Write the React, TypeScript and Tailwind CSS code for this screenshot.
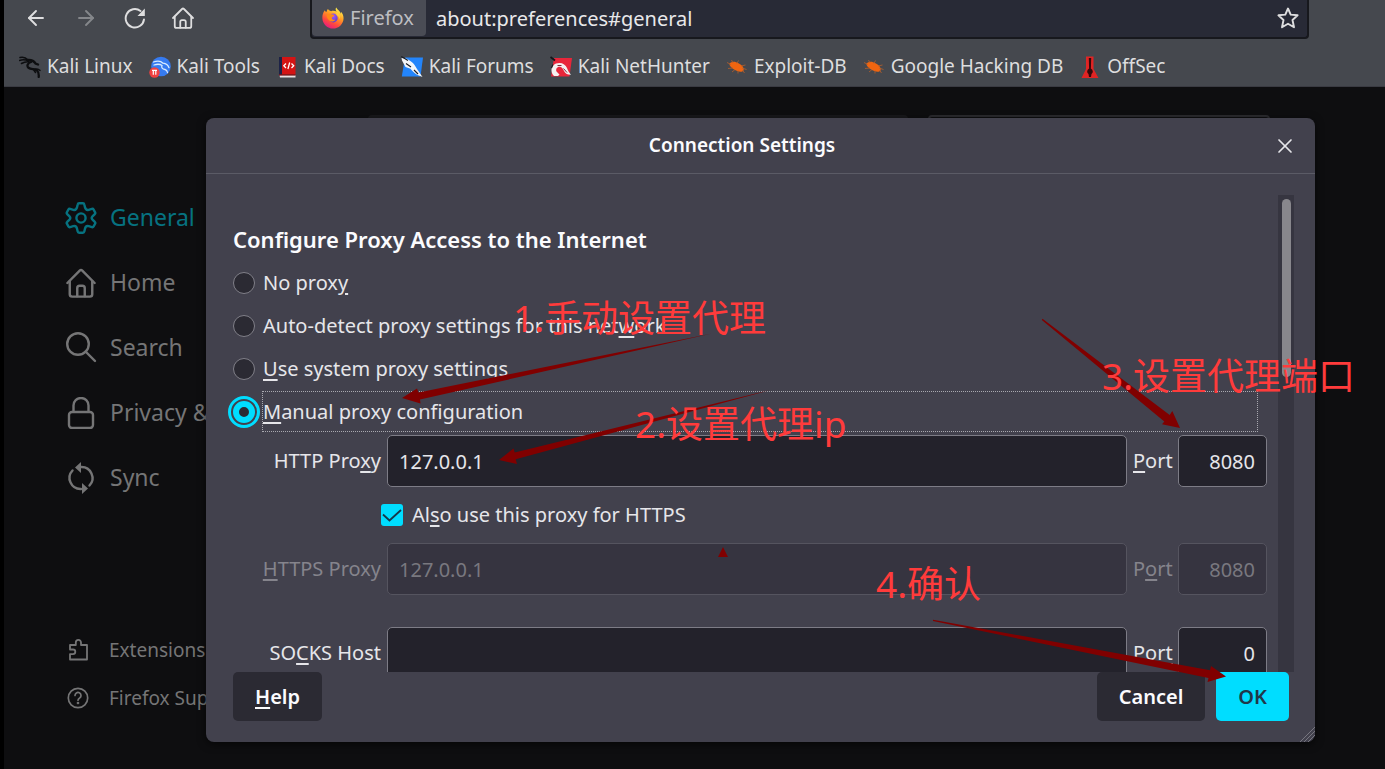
import { useState } from "react";
import type { ReactNode } from "react";
import { ArrowLeft, ArrowRight, X } from "lucide-react";

const font = "font-['Noto_Sans','Noto_Sans_CJK_SC',sans-serif]";

function HomeIcon({ className }: { className: string }) {
  return (
    <svg viewBox="0 0 32 32" className={className} fill="none" stroke="currentColor" strokeWidth="2.6" strokeLinecap="round" strokeLinejoin="round">
      <path d="M1.500 16 14.600 2.900a2 2 0 0 1 2.800 0L30.500 16" />
      <path d="M4 14v14a2.500 2.500 0 0 0 2.500 2.500h19A2.500 2.500 0 0 0 28 28V14" />
      <path d="M12 30V21.500a2.500 2.500 0 0 1 2.500-2.500h3a2.500 2.500 0 0 1 2.500 2.500V30" />
    </svg>
  );
}

function ReloadIcon() {
  return (
    <svg viewBox="0 0 22 22" className="size-[22px]" fill="none" stroke="currentColor" strokeWidth="1.9">
      <path d="M20 12.500A9.200 9.200 0 1 1 16.500 4" strokeLinecap="round" />
      <path d="M20.800 1.500v7.500H13.500z" fill="currentColor" stroke="none" />
    </svg>
  );
}

function StarIcon() {
  return (
    <svg viewBox="0 0 22 22" className="size-[22px]" fill="none" stroke="currentColor" strokeWidth="1.900" strokeLinejoin="round">
      <path d="M11 1.500 13.700 7.600 20.600 8.300 15.500 13 17 20.200 11 16.700 5 20.200 6.500 13 1.400 8.300 8.300 7.600z" />
    </svg>
  );
}

function FirefoxLogo() {
  return (
    <svg viewBox="0 0 24 24" className="size-[22px] shrink-0">
      <defs>
        <linearGradient id="ffBody" x1="0.8" y1="0" x2="0.25" y2="1">
          <stop offset="0.05" stopColor="#fff44f" />
          <stop offset="0.4" stopColor="#ff9a24" />
          <stop offset="0.7" stopColor="#ff4a3d" />
          <stop offset="1" stopColor="#e31587" />
        </linearGradient>
        <radialGradient id="ffGlobe" cx="0.5" cy="0.3" r="0.7">
          <stop offset="0" stopColor="#a25bf5" />
          <stop offset="1" stopColor="#5b3bd0" />
        </radialGradient>
      </defs>
      <path
        fill="url(#ffBody)"
        d="M15.500.5c-1 1.500-.8 3.200.6 4.600C14.500 4.200 12 3.800 10 4.500 8.200 4.300 7 3.300 6.600 2.300 5.600 3 5.200 4.200 5.200 5.300 4.200 5.300 3.300 4.700 3 3.600 1.200 5.800.2 9 .4 12.500.9 19 6 23.500 12 23.500S23.500 18.600 23.500 12.200c0-3-1.200-5.400-2.800-7 .2.900.2 1.600 0 2.200C19.800 4.200 17 3.400 15.500.5z"
      />
      <circle cx="12.300" cy="12" r="4.800" fill="url(#ffGlobe)" />
      <path fill="#ff8a16" d="M5 8.500c2-1.600 4.300-1.500 6-.3 1.300.1 2.300.4 2.300 1.200 0 .9-2 1.200-2.600 2.200-.2 1.600 1.500 2.900 3.800 2.200-1 2-4.500 2.800-6.700.8C5.800 12.900 5 10.500 5 8.500z" />
      <path fill="#ffd23c" d="M15.500 5c3.500 1.600 4.800 5 4 8.500-.5-2.500-1.700-4.200-3.700-4.900z" opacity="0.8" />
    </svg>
  );
}

function DragonIcon() {
  return (
    <svg viewBox="0 0 22 22" className="size-[22px]" fill="none" stroke="#0d0e10" strokeLinecap="round">
      <path d="M1 1.500c3-.800 6 .200 8 2.500M.500 4.500c3-1 6-.800 9 .400M2.500 7.500c2.500-1.600 5-2 7.500-1.800" strokeWidth="1.500" />
      <path d="M8.500 4c3-.300 6.500 1 8 3.500l2.500 1" strokeWidth="2.400" />
      <path d="M12 6C8.500 7 7.500 10 9.500 11.800c2.500 1.800 6 1 8.500 2.700 1.500 1.300 2 3.500 1.700 6.500" strokeWidth="2.300" />
      <path d="M15 13.500c2-.800 4-.300 6 .900M14.500 13.500l2 3" strokeWidth="1.500" />
    </svg>
  );
}

function ToolsIcon() {
  return (
    <svg viewBox="0 0 22 22" className="size-[22px]">
      <circle cx="12" cy="10.500" r="9.800" fill="#367bf0" />
      <path d="M4.500 6c4-1.500 7.500-1 9.500 1.200 3 .300 5 1.700 6 4.500M5 9c3-1 6-1 8 .500-1 2.200.500 3.600 3 4 1.500.400 2.200 1.400 2.500 3" stroke="#d9ecff" strokeWidth="1.300" fill="none" strokeLinecap="round" />
      <circle cx="5.500" cy="16.500" r="5.200" fill="#f04040" />
      <path d="M3 14.300h5M4.300 14.300v4.500M6.800 14.300v4.500" stroke="#fff" strokeWidth="1.200" />
    </svg>
  );
}

function DocsIcon() {
  return (
    <svg viewBox="0 0 22 22" className="size-[22px]">
      <path d="M3 1h3v18.500H3z" fill="#1d2347" />
      <path d="M6 1h13.500v17.500H6z" fill="#d41414" />
      <path d="M3.500 19.300h16v2.200H4z" fill="#e9e2e2" />
      <path d="M3 18.300h16.500v1.200H3z" fill="#8d0e12" />
      <path d="M10 7.500 7.800 9.800l2.200 2.200M15.500 7.500l2.200 2.300-2.200 2.200M13.700 6.500l-1.800 6.500" stroke="#fff" strokeWidth="1.300" fill="none" />
    </svg>
  );
}

function ForumsIcon() {
  return (
    <svg viewBox="0 0 22 22" className="size-[22px]">
      <path d="M4 1.500h18L19.500 20.500H.800z" fill="#2385fb" />
      <path d="M.500 2 6 2.800 10 5.500c3 1.500 4 4.500 6 7.500l5.500 8-5.500-2.300c-3-2.200-5-3.700-6.500-6L4.500 11 1 4.500z" fill="#f3f6fa" />
      <path d="M.300.500 7 4.500M5 7.500l5 3.500M13 14l4 4" stroke="#1a1c22" strokeWidth="1.100" />
    </svg>
  );
}

function NetHunterIcon() {
  return (
    <svg viewBox="0 0 22 22" className="size-[22px]">
      <path d="M4 2h18l-2.500 18.500H1z" fill="#e8263a" />
      <path d="M.500 1 5 4.500" stroke="#15161a" strokeWidth="1.800" />
      <path d="M4 20C0 16 .800 9.500 6 7.500c5-1.800 9.500.500 11 4.500.900 2.500 2 4.500 4 6.800-3 .200-5.500-1-7-3.800-1-2.300-2-3.800-4-4.200-3-.300-4.500 2.400-3.500 4.700L9.500 18.500 8 20z" fill="#f5f0f0" />
      <path d="M3 8.500 1.500 12" stroke="#1a1a20" strokeWidth="1.200" />
      <path d="M7.500 9.500h4M13.500 12.500l3.500 4" stroke="#6a1b2c" strokeWidth="0.900" />
    </svg>
  );
}

function ExploitIcon() {
  return (
    <svg viewBox="0 0 22 22" className="size-[22px]">
      <path d="M3.500 7.500C6 5 9.500 5.500 12.500 7.300c3.500 1.700 6 4.500 5 7.200-1.500 2.300-6.500 1-9.500-1-2.800-1.800-5-4.300-4.500-6z" fill="#f06510" />
      <path d="M1 6.500l4 2M7 7 5.500 4M11 7.500l1.500-3M15 10l4.500-1M16 12l4.500 1.500M7 12l-5 .500M9 13.500l-3 2.500M12 14.500v3M16.500 14l2 3" stroke="#b5602b" strokeWidth="0.800" />
    </svg>
  );
}

function OffSecIcon() {
  return (
    <svg viewBox="0 0 22 22" className="size-[22px]">
      <path d="M7 .500h7.500v12.500L19.500 22H2.500L7 13z" fill="#e02424" />
      <path d="M9.800 2h2.400l-.300 10.500c2.300 1.500 2.600 4 .600 5.500l-.500 3h-2l-.500-3c-2-1.500-1.700-4 .600-5.500z" fill="#34080a" />
    </svg>
  );
}

const bookmarks = [
  { label: "Kali Linux", icon: <DragonIcon /> },
  { label: "Kali Tools", icon: <ToolsIcon /> },
  { label: "Kali Docs", icon: <DocsIcon /> },
  { label: "Kali Forums", icon: <ForumsIcon /> },
  { label: "Kali NetHunter", icon: <NetHunterIcon /> },
  { label: "Exploit-DB", icon: <ExploitIcon /> },
  { label: "Google Hacking DB", icon: <ExploitIcon /> },
  { label: "OffSec", icon: <OffSecIcon /> },
];

function Toolbar() {
  return (
    <header className="bg-[#45484e] text-[#dededf]">
      <div className="flex h-[39px] items-start">
        <nav aria-label="Navigation" className="flex h-9 w-[306px] shrink-0 items-center gap-[26px] pl-5">
          <button aria-label="Back"><ArrowLeft className="size-6" strokeWidth={1.900} /></button>
          <button aria-label="Forward" className="text-[#85878b]"><ArrowRight className="size-6" strokeWidth={1.900} /></button>
          <button aria-label="Reload"><ReloadIcon /></button>
          <button aria-label="Home"><HomeIcon className="size-[22px]" /></button>
        </nav>
        <div className="mr-[76px] flex h-[39px] flex-1 items-start rounded-b-[4px] border-2 border-t-0 border-[#17181d] bg-[#282a36]">
          <div className="flex h-9 w-[114px] shrink-0 items-center gap-1.5 rounded-b-[4px] bg-[#4a4c55] pl-[10px] text-[20px] text-[#bdbec2]">
            <FirefoxLogo />
            Firefox
          </div>
          <input
            aria-label="Address"
            defaultValue="about:preferences#general"
            className="h-9 min-w-0 flex-1 bg-transparent pl-[10px] text-[20px] text-[#e8e8ea] outline-none"
          />
          <button aria-label="Bookmark this page" className="flex h-9 items-center pr-2"><StarIcon /></button>
        </div>
      </div>
      <nav aria-label="Bookmarks" className="flex h-12 items-center gap-4 border-b border-[#3a3b42] pl-[15px] pt-2">
        {bookmarks.map((b) => (
          <a key={b.label} href="#" className="flex h-10 items-center gap-1.5 whitespace-nowrap text-[19px]">
            {b.icon}
            {b.label}
          </a>
        ))}
      </nav>
    </header>
  );
}

function GearIcon() {
  return (
    <svg viewBox="0 0 32 32" className="size-8" fill="none" stroke="currentColor" strokeWidth="2.400" strokeLinejoin="round">
      <path d="M14.200 1.300h3.600a1.500 1.500 0 0 1 1.500 1.200l.800 3.200a3 3 0 0 0 3.600 2.100l3.200-.900a1.500 1.500 0 0 1 1.700.700l1.500 2.700a1.500 1.500 0 0 1-.300 1.800l-2.300 2.300a2.300 2.300 0 0 0 0 3.200l2.300 2.300a1.500 1.500 0 0 1 .300 1.800l-1.500 2.700a1.500 1.500 0 0 1-1.700.700l-3.200-.900a3 3 0 0 0-3.600 2.100l-.800 3.200a1.500 1.500 0 0 1-1.500 1.200h-3.600a1.500 1.500 0 0 1-1.500-1.200l-.800-3.200a3 3 0 0 0-3.600-2.100l-3.200.900a1.500 1.500 0 0 1-1.700-.700l-1.500-2.700a1.500 1.500 0 0 1 .300-1.800l2.300-2.300a2.300 2.300 0 0 0 0-3.200l-2.300-2.300a1.500 1.500 0 0 1-.300-1.800l1.500-2.700a1.500 1.500 0 0 1 1.700-.700l3.200.900a3 3 0 0 0 3.600-2.100l.800-3.200a1.500 1.500 0 0 1 1.500-1.200z" />
      <circle cx="16" cy="16" r="4.600" />
    </svg>
  );
}

function SearchIcon() {
  return (
    <svg viewBox="0 0 32 32" className="size-8" fill="none" stroke="currentColor" strokeWidth="2.400" strokeLinecap="round">
      <circle cx="13" cy="12" r="10.800" />
      <path d="M20.500 19.500 30 29" />
    </svg>
  );
}

function LockIcon() {
  return (
    <svg viewBox="0 0 32 32" className="size-8" fill="none" stroke="currentColor" strokeWidth="2.400">
      <rect x="4" y="15" width="24" height="16" rx="3" />
      <path d="M8.500 15V8.500a7.500 7.500 0 0 1 15 0V15" />
    </svg>
  );
}

function SyncIcon() {
  return (
    <svg viewBox="0 0 32 32" className="size-8" fill="none" stroke="currentColor" strokeWidth="2.400" strokeLinecap="round">
      <path d="M16 5a11 11 0 0 1 8.500 18.500M16 27A11 11 0 0 1 7.500 8.500" />
      <path d="M16 0v11l-6-5.500zM17 21v11l6-5.500z" fill="currentColor" stroke="none" />
    </svg>
  );
}

function PuzzleIcon() {
  return (
    <svg viewBox="0 0 22 22" className="size-[22px]" fill="none" stroke="currentColor" strokeWidth="1.800" strokeLinejoin="round">
      <path d="M3 20.500h17V6H14V3.500a2.600 2.600 0 0 0-5.200 0V6H3v4.500h3a2.300 2.300 0 0 1 0 4.600H3z" />
    </svg>
  );
}

function HelpIcon() {
  return (
    <svg viewBox="0 0 22 22" className="size-[22px]" fill="none" stroke="currentColor" strokeWidth="1.700" strokeLinecap="round">
      <circle cx="11" cy="11" r="9.700" />
      <path d="M8 8.500a3 3 0 1 1 4.800 2.400c-1.100.800-1.800 1.300-1.800 2.300" />
      <circle cx="11" cy="16" r="0.500" fill="currentColor" />
    </svg>
  );
}

const categories = [
  { label: "General", icon: <GearIcon /> },
  { label: "Home", icon: <HomeIcon className="size-[30px]" /> },
  { label: "Search", icon: <SearchIcon /> },
  { label: "Privacy & Security", icon: <LockIcon /> },
  { label: "Sync", icon: <SyncIcon /> },
];

function Sidebar() {
  return (
    <aside className="flex w-[364px] shrink-0 flex-col justify-between pb-[47px] pl-[61px] pt-[98px] text-[#757576]">
      <nav aria-label="Categories">
        {categories.map((c, i) => (
          <a
            key={c.label}
            href="#"
            className={`flex h-[65px] items-center gap-[13px] whitespace-nowrap text-[23px] ${i === 0 ? "text-[#067280]" : ""}`}
          >
            <span className="flex w-8 justify-center">{c.icon}</span>
            {c.label}
          </a>
        ))}
      </nav>
      <nav aria-label="More" className="text-[19px]">
        <a href="#" className="flex h-12 items-center gap-5 whitespace-nowrap pl-[2px]">
          <PuzzleIcon />
          Extensions &amp; Themes
        </a>
        <a href="#" className="flex h-12 items-center gap-5 whitespace-nowrap pl-[2px]">
          <HelpIcon />
          Firefox Support
        </a>
      </nav>
    </aside>
  );
}

// Access key underline
function Key({ children }: { children: ReactNode }) {
  return <u className="decoration-2 underline-offset-[3px]">{children}</u>;
}

const modes = [
  { id: "none", label: <>No prox<Key>y</Key></> },
  { id: "auto", label: <>Auto-detect proxy settings for this net<Key>w</Key>ork</> },
  { id: "system", label: <><Key>U</Key>se system proxy settings</> },
  { id: "manual", label: <><Key>M</Key>anual proxy configuration</> },
];

type RowProps = {
  id: string;
  label: ReactNode;
  portLabel: ReactNode;
  host: string;
  port: string;
  disabled?: boolean;
};

function ProxyRow({ id, label, portLabel, host, port, disabled }: RowProps) {
  const field =
    "h-[52px] rounded-[5px] border border-[#7d7c86] bg-[#23222b] px-[11px] outline-none disabled:border-[#55545f] disabled:bg-[#363440] disabled:text-[#79787f]";
  return (
    <div className={`flex items-center gap-1.5 ${disabled ? "text-[#85848c]" : ""}`}>
      <label htmlFor={id} className="w-[148px] shrink-0 text-right">{label}</label>
      <input id={id} defaultValue={host} disabled={disabled} className={`min-w-0 flex-1 ${field}`} />
      <label htmlFor={`${id}-port`} className="w-[39px] shrink-0">{portLabel}</label>
      <input id={`${id}-port`} defaultValue={port} disabled={disabled} className={`w-[89px] shrink-0 text-right ${field}`} />
    </div>
  );
}

function ConnectionDialog() {
  const [mode, setMode] = useState("manual");
  const [shared, setShared] = useState(true);

  return (
    <div
      role="dialog"
      aria-labelledby="dialog-title"
      className="absolute left-[206px] right-[70px] top-[118px] rounded-lg bg-[#42414d] text-[20px] text-[#e6e6ea] shadow-[0_2px_8px_rgba(0,0,0,0.6)]"
    >
      <div className="flex h-14 items-center border-b border-[#5b5b66] pr-[18px]">
        <h1 id="dialog-title" className="flex-1 pl-[5px] text-center text-[19px] font-semibold text-[#fbfbfe]">Connection Settings</h1>
        <button aria-label="Close">
          <X className="size-6" strokeWidth={1.700} />
        </button>
      </div>

      <div className="flex h-[498px] overflow-hidden pl-[27px] pr-[21px]">
        <div className="min-w-0 flex-1 pr-[11px] pt-[49px]">
          <fieldset className="mb-[2px]">
            <legend className="mb-[6px] h-8 text-[22px] font-semibold leading-8 text-[#fbfbfe]">
              Configure Proxy Access to the Internet
            </legend>
            {modes.map((m) => (
              <div key={m.id} className="flex h-[43px] items-center gap-[7px]">
                <input
                  type="radio"
                  name="mode"
                  id={m.id}
                  checked={mode === m.id}
                  onChange={() => setMode(m.id)}
                  className="size-[22px] shrink-0 appearance-none rounded-full border border-[#807f88] bg-[#2b2a33] checked:border-[6px] checked:border-[#00ddff] checked:outline-3 checked:outline-offset-2 checked:outline-[#00ddff]"
                />
                <label
                  htmlFor={m.id}
                  className={`mr-[9px] flex h-[41px] flex-1 items-center border border-dotted ${mode === m.id ? "border-[#a9a9b0]" : "border-transparent"}`}
                >
                  <span>{m.label}</span>
                </label>
              </div>
            ))}
          </fieldset>

          <ProxyRow id="http" label={<>HTTP Pro<Key>x</Key>y</>} portLabel={<><Key>P</Key>ort</>} host="127.0.0.1" port="8080" />
          <div className="flex h-14 items-center gap-[9px] pl-[148px]">
            <span className="relative flex size-[22px]">
              <input
                type="checkbox"
                id="shared"
                checked={shared}
                onChange={() => setShared(!shared)}
                className="size-[22px] appearance-none rounded-[3px] border-2 border-[#72717a] bg-[#2b2a33] checked:border-0 checked:bg-[#00ddff]"
              />
              {shared && (
                <svg viewBox="0 0 22 22" className="pointer-events-none absolute inset-0" fill="none" stroke="#15384a" strokeWidth="1.800">
                  <path d="M2 10.500 8.500 16.500 20 6" />
                </svg>
              )}
            </span>
            <label htmlFor="shared">Al<Key>s</Key>o use this proxy for HTTPS</label>
          </div>
          <ProxyRow id="https" label={<><Key>H</Key>TTPS Proxy</>} portLabel={<>P<Key>o</Key>rt</>} host="127.0.0.1" port="8080" disabled />
          <div className="mt-8">
            <ProxyRow id="socks" label={<>SO<Key>C</Key>KS Host</>} portLabel={<>Por<Key>t</Key></>} host="" port="0" />
          </div>
        </div>
        <div className="mt-[21px] w-4 shrink-0 bg-[#363540] pt-1">
          <div className="mx-auto h-[178px] w-[9px] rounded-full bg-[#88878c]" />
        </div>
      </div>

      <div className="flex items-center justify-between pb-[21px] pl-[27px] pr-[26px] font-semibold">
        <button className="h-[49px] rounded-[5px] bg-[#2b2a33] px-[22px] text-[#fbfbfe]"><Key>H</Key>elp</button>
        <div className="flex gap-[11px]">
          <button className="h-[49px] rounded-[5px] bg-[#2b2a33] px-[22px] text-[#fbfbfe]">Cancel</button>
          <button className="h-[49px] rounded-[5px] bg-[#00ddff] px-[22px] text-[#20384a]">OK</button>
        </div>
      </div>

      <svg viewBox="0 0 16 16" className="absolute bottom-0 right-0 size-4" stroke="#77767f" strokeWidth="1">
        <path d="M1 16 16 1M5 16 16 5M9 16 16 9" />
      </svg>
    </div>
  );
}

const note = "absolute whitespace-nowrap text-[37px] leading-[48px] text-[#ff3b3b]";

function Annotations() {
  return (
    <div className="pointer-events-none absolute inset-0 overflow-hidden">
      <svg viewBox="0 0 1385 769" className="absolute left-0 top-0 h-[769px] w-[1385px]" fill="#800000">
        <path d="M402 398 417 388.500 418.500 392.500 712 333.500 420 399.500 420.500 403.500z" />
        <path d="M499 460 513.500 448.500 514.700 452.500 770 390 515.700 459.300 517 464z" />
        <path d="M1042.500 318.800 1169.700 415 1172.300 411 1180 428 1162 424.300 1164.300 421.500 1041.800 320z" />
        <path d="M933 619.700 1210 670.300 1211 666 1226 676.500 1207.500 682 1208.500 678 933 621z" />
        <path d="M723 547 728 557H718z" />
      </svg>
      <p className={`${note} left-[513px] top-[294px]`}>1.手动设置代理</p>
      <p className={`${note} left-[635px] top-[400px]`}>2.设置代理ip</p>
      <p className={`${note} left-[1102px] top-[352px]`}>3.设置代理端口</p>
      <p className={`${note} left-[876px] top-[560px]`}>4.确认</p>
    </div>
  );
}

export default function App() {
  return (
    <div className={`relative flex min-h-screen flex-col overflow-hidden border-l-4 border-black bg-[#0e0e10] ${font}`}>
      <Toolbar />
      <div className="flex flex-1">
        <Sidebar />
        <main className="mr-[115px] flex flex-1 gap-5 pt-7">
          <div className="h-12 flex-1 rounded-[4px] bg-[#19191c]" />
          <div className="h-12 w-[342px] rounded-[4px] border-2 border-[#2b2b2f]" />
        </main>
      </div>
      <div className="absolute inset-0 -left-1">
        <ConnectionDialog />
        <Annotations />
      </div>
    </div>
  );
}
